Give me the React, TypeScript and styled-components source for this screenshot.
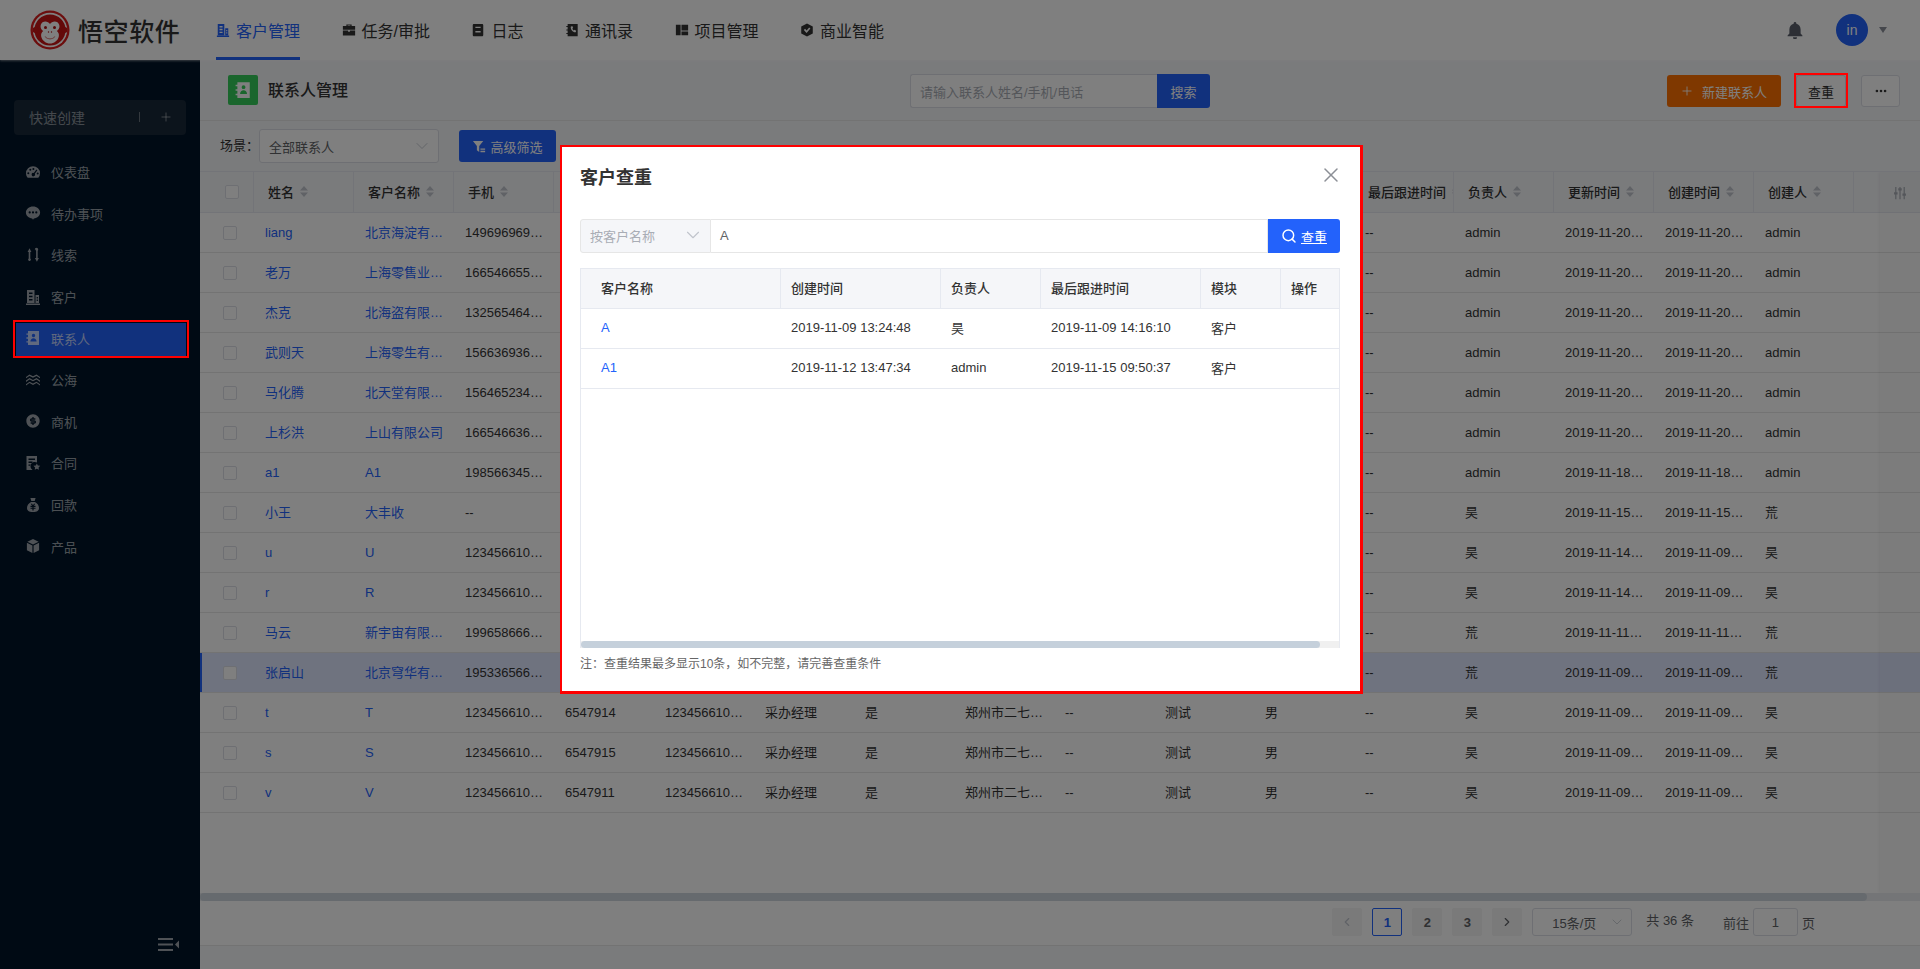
import React from "react";
import styled, { createGlobalStyle } from "styled-components";
import { ChevronDown, ChevronLeft, ChevronRight, Ellipsis, Plus, Search, X } from "lucide-react";
import { RiMoneyDollarCircleFill } from "react-icons/ri";

const Global = createGlobalStyle`
  html, body { margin: 0; padding: 0; height: 100%; overflow: hidden; }
  body { font-family: "Liberation Sans", "Noto Sans CJK SC", sans-serif; font-size: 13px; color: #333; background: #f5f6f9; }
  #root { height: 100%; }
  * { box-sizing: border-box; }
`;

/* ---------- icons ---------- */
type IconProps = { size?: number };
const Glyph = ({ size = 16, d }: IconProps & { d: string }) => (
  <svg width={size} height={size} viewBox="0 0 16 16" fill="currentColor" fillRule="evenodd" clipRule="evenodd">
    <path d={d} />
  </svg>
);
const BUILDING = "M2 1h7.5v13H2zM4 3.5V5h3.5V3.5zM4 6.7v1.5h3.5V6.7zM4 9.9v1.5h3.5V9.9zM10.5 6H14v8h-3.5zM11.7 8v1.4h1.2V8zM11.7 10.6V12h1.2v-1.4zM1 14.4h14V16H1z";
const BRIEFCASE = "M5 3.4V1.6h6v1.8h4v4.2H1V3.4zM6.4 3.4h3.2V2.9H6.4zM1 8.7h6v1.3h2V8.7h6v5.7H1z";
const DOC = "M3.4 1h9.2c.8 0 1.4.6 1.4 1.4v11.2c0 .8-.6 1.4-1.4 1.4H3.4C2.6 15 2 14.4 2 13.6V2.4C2 1.6 2.6 1 3.4 1zM5 4.2v1.6h6V4.2zM5 9.2v1.6h6V9.2z";
const PHONEBOOK = "M3 1h11.5v14H3v-2.3H1.5v-1.3H3V8.6H1.5V7.4H3V4.6H1.5V3.3H3zM6.6 4.2l1.7-.7 1 2.2-1 .7c.3.9.9 1.7 1.7 2.1l.8-.9 2 1.2-.6 1.7c-3 .4-6-3.2-5.6-6.3z";
const BOOK = "M1 2h5.4v12H1zM7.4 2H15v6.6H7.4zM7.4 9.8H15V14H7.4z";
const SHIELD = "M8 .5l6.6 3.6v7.8L8 15.5l-6.6-3.6V4.1zM4.4 8l1.4-1.3 1.7 1.8 3-3.5 1.4 1.2-4.4 5.2z";
const BELL = "M8 .8c.7 0 1.2.5 1.2 1.2v.5c2.3.6 3.8 2.6 3.8 5V11l1.6 1.9v.7H1.4v-.7L3 11V7.500c0-2.400 1.500-4.400 3.800-5V2c0-.7.5-1.200 1.200-1.200zM6.200 14.500h3.600a1.800 1.800 0 01-3.600 0z";
const GAUGE = "M8 2.200a7 7 0 00-7 7c0 1.700.6 3.300 1.700 4.600h10.600A7 7 0 0015 9.200a7 7 0 00-7-7zM3.300 8.300a1 1 0 110 2 1 1 0 010-2zM5.300 4.800a1 1 0 110 2 1 1 0 010-2zM8.400 4a1 1 0 110 2 1 1 0 010-2zM11.400 5.600l1 .7-2.600 3.500a1.700 1.700 0 11-1-.8zM12.700 8.500a1 1 0 110 2 1 1 0 010-2z";
const CHAT = "M8 1.400c-3.900 0-7.100 2.700-7.100 6 0 3.100 2.800 5.600 6.300 6l.8 1.400.9-1.400c3.500-.4 6.200-2.900 6.200-6 0-3.300-3.200-6-7.100-6zM4.700 6.300a1.100 1.100 0 110 2.200 1.100 1.100 0 010-2.200zM8 6.300a1.100 1.100 0 110 2.200 1.100 1.100 0 010-2.200zM11.300 6.300a1.100 1.100 0 110 2.200 1.100 1.100 0 010-2.200z";
const LEADS = "M2.600 5L4.500 1.300 6.400 5H5.300v6.500a1.300 1.300 0 11-1.600 0V5zM9.800 2.500a1.700 1.700 0 113.400 0c0 .5-.2.900-.5 1.200v7.300h1.200l-2 3.800-2-3.800h1.200V3.700c-.4-.3-.6-.7-.6-1.200z";
const CONTACT = "M3 1h11v14H3v-2.400H1.400v-1.300H3V8.700H1.400V7.300H3V4.700H1.400V3.400H3zM8.500 3.800a1.700 1.700 0 110 3.400 1.700 1.700 0 010-3.400zM5.400 11.600c0-2 1.400-3.300 3.100-3.300s3.100 1.300 3.100 3.300z";
const WAVES = "M1 5l3.500-2.500L8 4.300l3.500-1.800L15 5v1.300l-3.500-2.400L8 5.700 4.500 3.900 1 6.300zM1 8.600l3.500-2.500L8 7.900l3.500-1.800L15 8.600v1.300L11.500 7.500 8 9.300 4.500 7.500 1 9.900zM1 12.200l3.500-2.500L8 11.500l3.500-1.800 3.500 2.500v1.300l-3.500-2.400L8 12.900l-3.500-1.800L1 13.500z";
const CONTRACT = "M1.500 1H12v6.500a4.200 4.200 0 00-4.400 7.500H1.500zM3.500 3.600v1.400H10V3.600zM3.500 6.500v1.400h4V6.500zM3.500 9.400v1.400h2.500V9.400zM11.800 8.400l1.100 2 2.300.4-1.600 1.600.3 2.300-2.100-1-2.100 1 .4-2.300-1.700-1.600 2.400-.4z";
const BAG = "M5.400 1h5.200L9.700 4H6.300zM6 5h4c2.500 1.300 4 3.600 4 6 0 2.500-1.800 4-6 4s-6-1.500-6-4c0-2.400 1.500-4.700 4-6zM5.700 6.800l1.500 2H5.500v1.100h1.900v.8H5.500v1.100h1.900V13.500h1.200v-1.700h1.900v-1.100H8.600v-.8h1.900V8.800H8.800l1.500-2H9l-1 1.500L7 6.800z";
const BOX = "M8 1l5.600 2.700L8 6.500 2.400 3.700zM1.900 4.700l5.500 2.800V15l-5.500-2.800zM14.100 4.700L8.600 7.500V15l5.500-2.800z";
const FILTER = "M1 2h11L7.700 7.500v6.300L5.200 12V7.500zM9 10h5v1.400H9zM9 12.600h5V14H9z";
const SLIDERS = "M2.500 1h1.400v6h1.300v2.600H3.900V15H2.500V9.600H1.200V7h1.300zM7.300 1h1.400v1.500H10v2.600H8.700V15H7.300V5.100H6V2.500h1.300zM12.100 1h1.400v7.500h1.300v2.600h-1.300V15h-1.400v-3.900h-1.300V8.500h1.300z";

const SortGlyph = () => (
  <svg width="8" height="11" viewBox="0 0 8 11" fill="currentColor">
    <path d="M4 0l4 4.400H0zM4 11L0 6.600h8z" />
  </svg>
);

const LogoMark = () => (
  <svg width="40" height="40" viewBox="0 0 40 40">
    <circle cx="20" cy="20" r="19.500" fill="#d91c1c" />
    <circle cx="20" cy="20" r="17.200" fill="#fff" />
    <circle cx="20" cy="20" r="15.600" fill="#c81414" />
    <circle cx="5.500" cy="20" r="3" fill="#c81414" />
    <circle cx="34.500" cy="20" r="3" fill="#c81414" />
    <path fill="#fff" d="M20 14c2-3.500 8-3.800 9.300 1 .7 2.700-.7 4.800-2.500 6 1.500 1.200 2.500 3.200 2 5.500-.9 4.300-4.900 7-8.800 7s-7.900-2.700-8.800-7c-.5-2.300.5-4.300 2-5.500-1.800-1.200-3.200-3.300-2.500-6 1.300-4.800 7.300-4.500 9.300-1z" />
    <circle cx="15.500" cy="17.500" r="1.500" fill="#b01010" />
    <circle cx="24.500" cy="17.500" r="1.500" fill="#b01010" />
    <circle cx="18.500" cy="22" r=".7" fill="#b01010" />
    <circle cx="21.500" cy="22" r=".7" fill="#b01010" />
    <path d="M15 26.500c2.500 3.200 7.500 3.200 10 0" fill="none" stroke="#d88" strokeWidth="1.200" />
  </svg>
);

/* ---------- top bar ---------- */
const Page = styled.div`
  display: flex;
  flex-direction: column;
  height: 100vh;
`;
const TopBar = styled.header`
  display: flex;
  align-items: stretch;
  flex: none;
  height: 60px;
  padding-left: 30px;
  background: #fff;
  box-shadow: 0 1px 2px rgba(255, 255, 255, 0.45);
  position: relative;
`;
const Brand = styled.div`
  display: flex;
  align-items: center;
  gap: 8px;
  width: 186px;
  font-size: 25px;
  font-weight: 500;
  letter-spacing: 0.6px;
  color: #333;
  white-space: nowrap;
`;
const Nav = styled.nav`
  display: flex;
  gap: 41.500px;
`;
const NavItem = styled.a<{ $active?: boolean }>`
  display: flex;
  align-items: center;
  gap: 6px;
  font-size: 16px;
  color: ${(p) => (p.$active ? "#2362fb" : "#333")};
  border-bottom: 3px solid ${(p) => (p.$active ? "#2362fb" : "transparent")};
  padding-top: 3px;
`;
const TopRight = styled.div`
  margin-left: auto;
  display: flex;
  align-items: center;
  padding-right: 33px;
  color: #5a5f6b;
`;
const Avatar = styled.div`
  width: 32px;
  height: 32px;
  margin-left: 32px;
  border-radius: 50%;
  background: #2362fb;
  color: #fff;
  font-size: 14px;
  display: flex;
  align-items: center;
  justify-content: center;
`;
const Caret = styled.span`
  width: 0;
  height: 0;
  margin-left: 11px;
  border-left: 4.500px solid transparent;
  border-right: 4.500px solid transparent;
  border-top: 6px solid #8a8f99;
`;

/* ---------- side bar ---------- */
const Body = styled.div`
  display: flex;
  flex: 1;
  min-height: 0;
`;
const Side = styled.aside`
  flex: none;
  width: 200px;
  background: #001428;
  display: flex;
  flex-direction: column;
  padding: 40px 14px 18px;
  color: rgba(255, 255, 255, 0.62);
`;
const Quick = styled.div`
  display: flex;
  align-items: center;
  height: 35px;
  padding: 0 0 2px 15px;
  margin-bottom: 17px;
  border-radius: 4px;
  background: #182838;
  font-size: 14px;
  color: rgba(255, 255, 255, 0.5);
`;
const QuickBar = styled.span`
  width: 1px;
  height: 10px;
  margin-left: 54px;
  background: rgba(255, 255, 255, 0.35);
`;
const QuickPlus = styled.span`
  display: flex;
  margin-left: 19px;
`;
const Menu = styled.ul`
  list-style: none;
  margin: 0;
  padding: 0;
`;
const MenuItem = styled.li<{ $active?: boolean }>`
  position: relative;
  display: flex;
  align-items: center;
  gap: 10px;
  height: 41.600px;
  padding: 0 0 2px 11px;
  font-size: 13px;
  ${(p) =>
    p.$active &&
    `
    margin-left: 2px;
    padding-left: 9px;
    color: rgba(255,255,255,.72);
    background: linear-gradient(#2362fb, #2362fb) center / 100% 33px no-repeat;
    &::after {
      content: "";
      position: absolute;
      z-index: 1001;
      left: -3px; right: -3px; top: 2px; bottom: 2px;
      border: 2px solid #f00;
    }
  `}
`;
const Collapse = styled.div`
  margin-top: auto;
  margin-right: 6px;
  align-self: flex-end;
  display: flex;
  color: rgba(255, 255, 255, 0.62);
`;

/* ---------- page head ---------- */
const Main = styled.main`
  flex: 1;
  min-width: 0;
  display: flex;
  flex-direction: column;
`;
const Head = styled.div`
  flex: none;
  display: flex;
  align-items: center;
  height: 61px;
  padding: 2px 20px 0 28px;
  border-bottom: 1px solid #e6e6e6;
`;
const TitleBlock = styled.div`
  display: flex;
  align-items: center;
  gap: 10px;
  width: 682px;
  margin-bottom: 2px;
`;
const TitleIcon = styled.span`
  width: 30px;
  height: 30px;
  border-radius: 2px;
  background: #34cc5a;
  color: #fff;
  display: flex;
  align-items: center;
  justify-content: center;
`;
const Title = styled.div`
  font-size: 16px;
  font-weight: 500;
  padding-bottom: 3px;
`;
const SearchBox = styled.div`
  display: flex;
  width: 300px;
  height: 34px;
`;
const SearchInput = styled.div`
  flex: 1;
  display: flex;
  align-items: center;
  padding-left: 9px;
  background: #fff;
  border: 1px solid #dcdfe6;
  border-right: 0;
  border-radius: 3px 0 0 3px;
  color: #a9adb5;
`;
const SearchBtn = styled.div`
  width: 53px;
  background: #2362fb;
  border-radius: 0 3px 3px 0;
  color: #fff;
  display: flex;
  align-items: center;
  justify-content: center;
`;
const Actions = styled.div`
  margin-left: auto;
  display: flex;
  gap: 15px;
`;
const CreateBtn = styled.div`
  width: 114px;
  height: 32px;
  display: flex;
  align-items: center;
  gap: 8px;
  padding-left: 13px;
  border-radius: 3px;
  background: #ff7000;
  color: #fff;
`;
const PlainBtn = styled.div<{ $marked?: boolean; $w: number }>`
  position: relative;
  width: ${(p) => p.$w}px;
  height: 32px;
  display: flex;
  align-items: center;
  justify-content: center;
  border: 1px solid #dcdfe6;
  border-radius: 3px;
  background: #fff;
  ${(p) =>
    p.$marked &&
    `
    &::after {
      content: "";
      position: absolute;
      z-index: 1001;
      inset: -3px -3px -2px -3px;
      border: 2px solid #f00;
    }
  `}
`;
const FilterBar = styled.div`
  flex: none;
  display: flex;
  align-items: center;
  height: 50px;
  padding-left: 20px;
`;
const FilterLabel = styled.span`
  width: 39px;
  padding-bottom: 3px;
`;
const Picker = styled.div<{ $w: number; $h: number; $indent: number }>`
  width: ${(p) => p.$w}px;
  height: ${(p) => p.$h}px;
  display: flex;
  align-items: center;
  justify-content: space-between;
  padding: 0 6px 0 ${(p) => p.$indent}px;
  background: #fff;
  border: 1px solid #dcdfe6;
  border-radius: 3px;
  color: #606266;
  svg {
    color: #c0c4cc;
  }
`;
const AdvancedBtn = styled.div`
  margin-left: 20px;
  width: 97px;
  height: 32px;
  display: flex;
  align-items: center;
  justify-content: center;
  gap: 3px;
  border-radius: 3px;
  background: #2362fb;
  color: #fff;
`;

/* ---------- main table ---------- */
const TableArea = styled.div`
  flex: 1;
  min-height: 0;
  position: relative;
  overflow: hidden;
  background: #fff;
  border-top: 1px solid #e6e9f0;
`;
const HeadRow = styled.div`
  display: flex;
  height: 41px;
  background: #f5f6f9;
  border-bottom: 1px solid #e6e9f0;
`;
const Row = styled.div<{ $selected?: boolean }>`
  position: relative;
  display: flex;
  height: 40px;
  border-bottom: 1px solid #e6e6e6;
  background: ${(p) => (p.$selected ? "#dfe6ff" : "#fff")};
  ${(p) => p.$selected && "box-shadow: inset 2px 0 0 #2362fb;"}
`;
const CheckCell = styled.div<{ $pad: number; $rule?: boolean }>`
  flex: none;
  width: 54px;
  display: flex;
  align-items: center;
  padding-left: ${(p) => p.$pad}px;
  ${(p) => p.$rule && "border-right: 1px solid #e6e9f0;"}
`;
const Check = styled.span`
  width: 14px;
  height: 14px;
  border: 1px solid #dcdfe6;
  border-radius: 2px;
  background: #fff;
`;
const HeadCell = styled.div`
  flex: none;
  width: 100px;
  display: flex;
  align-items: center;
  gap: 6px;
  padding: 0 0 2px 14px;
  font-weight: 500;
  white-space: nowrap;
  overflow: hidden;
  border-right: 1px solid #e6e9f0;
`;
const SortMark = styled.span`
  display: flex;
  flex: none;
  color: #c0c4cc;
`;
const Cell = styled.div<{ $link?: boolean; $tight?: boolean }>`
  flex: none;
  width: 100px;
  line-height: 39px;
  padding: 0 ${(p) => (p.$tight ? 10 : 9)}px 0 11px;
  white-space: nowrap;
  overflow: hidden;
  text-overflow: ellipsis;
  color: ${(p) => (p.$link ? "#2362fb" : "#333")};
`;
const FixedStrip = styled.div`
  position: absolute;
  top: 0;
  right: 0;
  bottom: 0;
  width: 40px;
  background: rgba(0, 0, 0, 0.025);
  box-shadow: -1px 0 3px rgba(0, 0, 0, 0.06);
`;
const StripHead = styled.div`
  height: 41px;
  display: flex;
  align-items: center;
  justify-content: center;
  color: #a9adb5;
`;
const BarTrack = styled.div`
  flex: none;
  height: 8px;
  background: #e8eaee;
`;
const BarThumb = styled.div<{ $w: number }>`
  width: ${(p) => p.$w}px;
  height: 100%;
  border-radius: 4px;
  background: #cdd5dd;
`;
const Footer = styled.div`
  flex: none;
  display: flex;
  align-items: flex-start;
  justify-content: flex-end;
  height: 45px;
  padding: 7px 105px 0 0;
  gap: 10px;
  background: #fff;
  border-bottom: 1px solid #e6e6e6;
  margin-bottom: 23px;
  color: #606266;
`;
const PageBtn = styled.div<{ $active?: boolean; $off?: boolean }>`
  width: 30px;
  height: 28px;
  display: flex;
  align-items: center;
  justify-content: center;
  border-radius: 2px;
  font-weight: 700;
  background: ${(p) => (p.$active ? "#fff" : "#f4f4f5")};
  border: 1px solid ${(p) => (p.$active ? "#2362fb" : "#f4f4f5")};
  color: ${(p) => (p.$active ? "#2362fb" : p.$off ? "#c0c4cc" : "#606266")};
`;
const Total = styled.span`
  margin-left: 4px;
  line-height: 26px;
`;
const GoTo = styled.span`
  margin-left: 19px;
  display: flex;
  align-items: center;
  gap: 4px;
`;
const GoInput = styled.span`
  width: 45px;
  height: 28px;
  display: flex;
  align-items: center;
  justify-content: center;
  background: #fff;
  border: 1px solid #dcdfe6;
  border-radius: 3px;
`;

/* ---------- dialog ---------- */
const Overlay = styled.div`
  position: fixed;
  inset: 0;
  z-index: 1000;
  background: rgba(0, 0, 0, 0.5);
`;
const Dialog = styled.div`
  position: relative;
  width: 800px;
  height: 544px;
  margin: 147px auto 0;
  padding: 0 20px;
  background: #fff;
  &::after {
    content: "";
    position: absolute;
    left: 0;
    top: -2px;
    right: -3px;
    bottom: -3px;
    border-style: solid;
    border-color: #f00;
    border-width: 2px 3px 3px 2px;
    pointer-events: none;
  }
`;
const DialogHead = styled.div`
  display: flex;
  align-items: center;
  justify-content: space-between;
  height: 60px;
  margin-bottom: 12px;
`;
const DialogTitle = styled.div`
  font-size: 18px;
  font-weight: 700;
  padding-bottom: 2px;
`;
const CloseBtn = styled.span`
  display: flex;
  margin-right: -3px;
  margin-bottom: 4px;
  color: #8c8f96;
`;
const QueryRow = styled.div`
  display: flex;
  height: 34px;
  margin-bottom: 15px;
`;
const QueryType = styled.div`
  width: 131px;
  display: flex;
  align-items: center;
  justify-content: space-between;
  padding: 0 6px 2px 9px;
  background: #f5f6f9;
  border: 1px solid #e6e6e6;
  border-radius: 3px 0 0 3px;
  color: #a9adb5;
  svg {
    color: #c0c4cc;
  }
`;
const QueryInput = styled.div`
  flex: 1;
  display: flex;
  align-items: center;
  padding: 0 0 2px 9px;
  border: 1px solid #e6e6e6;
  border-left: 0;
  font-size: 13px;
  color: #606266;
`;
const QueryBtn = styled.div`
  width: 72px;
  display: flex;
  align-items: center;
  justify-content: center;
  gap: 4px;
  background: #2362fb;
  border-radius: 0 3px 3px 0;
  color: #fff;
  span {
    text-decoration: underline;
  }
`;
const ResultBox = styled.div`
  display: flex;
  flex-direction: column;
  height: 380px;
  overflow: hidden;
  border: 1px solid #e6e9f0;
  border-bottom: 0;
`;
const ResultHead = styled.div`
  display: flex;
  flex: none;
  height: 40px;
  background: #f5f6f9;
  border-bottom: 1px solid #e6e9f0;
  font-weight: 500;
`;
const ResultRow = styled.div`
  display: flex;
  flex: none;
  height: 40px;
  border-bottom: 1px solid #e6e9f0;
`;
const ResultHeadCell = styled.div<{ $w: number; $first?: boolean }>`
  flex: none;
  width: ${(p) => p.$w}px;
  display: flex;
  align-items: center;
  padding: 0 0 2px ${(p) => (p.$first ? 20 : 10)}px;
  border-right: 1px solid #e6e9f0;
`;
const ResultCell = styled.div<{ $w: number; $first?: boolean; $link?: boolean }>`
  flex: none;
  width: ${(p) => p.$w}px;
  display: flex;
  align-items: center;
  padding: 0 0 2px ${(p) => (p.$first ? 20 : 10)}px;
  color: ${(p) => (p.$link ? "#2362fb" : "#333")};
`;
const ResultSpacer = styled.div`
  flex: 1;
`;
const ResultTrack = styled.div`
  flex: none;
  height: 7px;
  background: #f0f0f0;
`;
const ResultThumb = styled.div`
  width: 739px;
  height: 100%;
  border-radius: 4px;
  background: #c5d0db;
`;
const Note = styled.div`
  margin-top: 9px;
  font-size: 12px;
  line-height: 14px;
  color: #666;
`;

/* ---------- data ---------- */
const navItems = [
  { d: BUILDING, label: "客户管理", active: true },
  { d: BRIEFCASE, label: "任务/审批" },
  { d: DOC, label: "日志" },
  { d: PHONEBOOK, label: "通讯录" },
  { d: BOOK, label: "项目管理" },
  { d: SHIELD, label: "商业智能" },
];
const sideItems: { d?: string; label: string; active?: boolean }[] = [
  { d: GAUGE, label: "仪表盘" },
  { d: CHAT, label: "待办事项" },
  { d: LEADS, label: "线索" },
  { d: BUILDING, label: "客户" },
  { d: CONTACT, label: "联系人", active: true },
  { d: WAVES, label: "公海" },
  { label: "商机" },
  { d: CONTRACT, label: "合同" },
  { d: BAG, label: "回款" },
  { d: BOX, label: "产品" },
];
const headers = ["姓名", "客户名称", "手机", "电话", "手机号码", "职务", "是否关键决策人", "地址", "下次联系时间", "备注", "性别", "最后跟进时间", "负责人", "更新时间", "创建时间", "创建人"];
const T = (d: string) => `2019-11-${d} 10:30:12`;
const rows = [
  ["liang", "北京海淀有限公司", "14969696969", "admin", "20", "20", "admin"],
  ["老万", "上海零售业有限公司", "16654665555", "admin", "20", "20", "admin"],
  ["杰克", "北海盗有限公司", "13256546464", "admin", "20", "20", "admin"],
  ["武则天", "上海零生有限公司", "15663693636", "admin", "20", "20", "admin"],
  ["马化腾", "北天堂有限公司", "15646523434", "admin", "20", "20", "admin"],
  ["上杉洪", "上山有限公司", "16654663636", "admin", "20", "20", "admin"],
  ["a1", "A1", "19856634545", "admin", "18", "18", "admin"],
  ["小王", "大丰收", "--", "昊", "15", "15", "荒"],
  ["u", "U", "12345661016", "昊", "14", "09", "昊"],
  ["r", "R", "12345661012", "昊", "14", "09", "昊"],
  ["马云", "新宇宙有限公司", "19965866666", "荒", "11", "11", "荒"],
  ["张启山", "北京穹华有限公司", "19533656666", "荒", "09", "09", "荒"],
  ["t", "T", "12345661013", "昊", "09", "09", "昊"],
  ["s", "S", "12345661014", "昊", "09", "09", "昊"],
  ["v", "V", "12345661015", "昊", "09", "09", "昊"],
];
const phones = ["6547914", "6547915", "6547911"];
const resultCols = [
  { w: 200, label: "客户名称" },
  { w: 160, label: "创建时间" },
  { w: 100, label: "负责人" },
  { w: 160, label: "最后跟进时间" },
  { w: 80, label: "模块" },
  { w: 60, label: "操作" },
];
const results = [
  ["A", "2019-11-09 13:24:48", "昊", "2019-11-09 14:16:10", "客户", ""],
  ["A1", "2019-11-12 13:47:34", "admin", "2019-11-15 09:50:37", "客户", ""],
];

export default function App() {
  return (
    <Page>
      <Global />
      <TopBar>
        <Brand>
          <LogoMark />
          悟空软件
        </Brand>
        <Nav>
          {navItems.map((n) => (
            <NavItem key={n.label} $active={n.active}>
              <Glyph d={n.d} size={14} />
              {n.label}
            </NavItem>
          ))}
        </Nav>
        <TopRight>
          <Glyph d={BELL} size={18} />
          <Avatar>in</Avatar>
          <Caret />
        </TopRight>
      </TopBar>
      <Body>
        <Side>
          <Quick>
            快速创建
            <QuickBar />
            <QuickPlus>
              <Plus size={14} strokeWidth={1.5} />
            </QuickPlus>
          </Quick>
          <Menu>
            {sideItems.map((s) => (
              <MenuItem key={s.label} $active={s.active}>
                {s.d ? <Glyph d={s.d} size={16} /> : <RiMoneyDollarCircleFill size={16} />}
                {s.label}
              </MenuItem>
            ))}
          </Menu>
          <Collapse>
            <svg width="22" height="13" viewBox="0 0 22 13" fill="currentColor">
              <path d="M0 0h15v2H0zM0 5.500h15v2H0zM0 11h15v2H0zM21 2.500v8l-4-4z" />
            </svg>
          </Collapse>
        </Side>
        <Main>
          <Head>
            <TitleBlock>
              <TitleIcon>
                <Glyph d={CONTACT} size={18} />
              </TitleIcon>
              <Title>联系人管理</Title>
            </TitleBlock>
            <SearchBox>
              <SearchInput>请输入联系人姓名/手机/电话</SearchInput>
              <SearchBtn>搜索</SearchBtn>
            </SearchBox>
            <Actions>
              <CreateBtn>
                <Plus size={14} strokeWidth={1.5} />
                新建联系人
              </CreateBtn>
              <PlainBtn $w={50} $marked>
                查重
              </PlainBtn>
              <PlainBtn $w={39}>
                <Ellipsis size={14} strokeWidth={2.5} />
              </PlainBtn>
            </Actions>
          </Head>
          <FilterBar>
            <FilterLabel>场景：</FilterLabel>
            <Picker $w={180} $h={34} $indent={9}>
              全部联系人
              <ChevronDown size={20} strokeWidth={1.1} />
            </Picker>
            <AdvancedBtn>
              <Glyph d={FILTER} size={15} />
              高级筛选
            </AdvancedBtn>
          </FilterBar>
          <TableArea>
            <HeadRow>
              <CheckCell $pad={25} $rule>
                <Check />
              </CheckCell>
              {headers.map((h) => (
                <HeadCell key={h}>
                  {h}
                  <SortMark>
                    <SortGlyph />
                  </SortMark>
                </HeadCell>
              ))}
            </HeadRow>
            {rows.map((r, i) => (
              <Row key={r[0]} $selected={r[0] === "张启山"}>
                <CheckCell $pad={23}>
                  <Check />
                </CheckCell>
                <Cell $link>{r[0]}</Cell>
                <Cell $link>{r[1]}</Cell>
                <Cell $tight>{r[2]}</Cell>
                <Cell>{phones[i % 3]}</Cell>
                <Cell $tight>{r[2]}</Cell>
                <Cell>采办经理</Cell>
                <Cell>是</Cell>
                <Cell>郑州市二七区大学路</Cell>
                <Cell>--</Cell>
                <Cell>测试</Cell>
                <Cell>男</Cell>
                <Cell>--</Cell>
                <Cell>{r[3]}</Cell>
                <Cell>{T(r[4])}</Cell>
                <Cell>{T(r[5])}</Cell>
                <Cell>{r[6]}</Cell>
              </Row>
            ))}
            <FixedStrip>
              <StripHead>
                <Glyph d={SLIDERS} size={14} />
              </StripHead>
            </FixedStrip>
          </TableArea>
          <BarTrack>
            <BarThumb $w={1667} />
          </BarTrack>
          <Footer>
            <PageBtn $off>
              <ChevronLeft size={14} />
            </PageBtn>
            <PageBtn $active>1</PageBtn>
            <PageBtn>2</PageBtn>
            <PageBtn>3</PageBtn>
            <PageBtn>
              <ChevronRight size={14} />
            </PageBtn>
            <Picker $w={100} $h={28} $indent={19}>
              15条/页
              <ChevronDown size={16} strokeWidth={1.2} />
            </Picker>
            <Total>共 36 条</Total>
            <GoTo>
              前往
              <GoInput>1</GoInput>
              页
            </GoTo>
          </Footer>
        </Main>
      </Body>
      <Overlay>
        <Dialog>
          <DialogHead>
            <DialogTitle>客户查重</DialogTitle>
            <CloseBtn>
              <X size={24} strokeWidth={1.5} />
            </CloseBtn>
          </DialogHead>
          <QueryRow>
            <QueryType>
              按客户名称
              <ChevronDown size={22} strokeWidth={1.2} />
            </QueryType>
            <QueryInput>A</QueryInput>
            <QueryBtn>
              <Search size={16} strokeWidth={2.2} />
              <span>查重</span>
            </QueryBtn>
          </QueryRow>
          <ResultBox>
            <ResultHead>
              {resultCols.map((c, i) => (
                <ResultHeadCell key={c.label} $w={c.w} $first={i === 0}>
                  {c.label}
                </ResultHeadCell>
              ))}
            </ResultHead>
            {results.map((r) => (
              <ResultRow key={r[0]}>
                {r.map((v, i) => (
                  <ResultCell key={i} $w={resultCols[i].w} $first={i === 0} $link={i === 0}>
                    {v}
                  </ResultCell>
                ))}
              </ResultRow>
            ))}
            <ResultSpacer />
            <ResultTrack>
              <ResultThumb />
            </ResultTrack>
          </ResultBox>
          <Note>注：查重结果最多显示10条，如不完整，请完善查重条件</Note>
        </Dialog>
      </Overlay>
    </Page>
  );
}
